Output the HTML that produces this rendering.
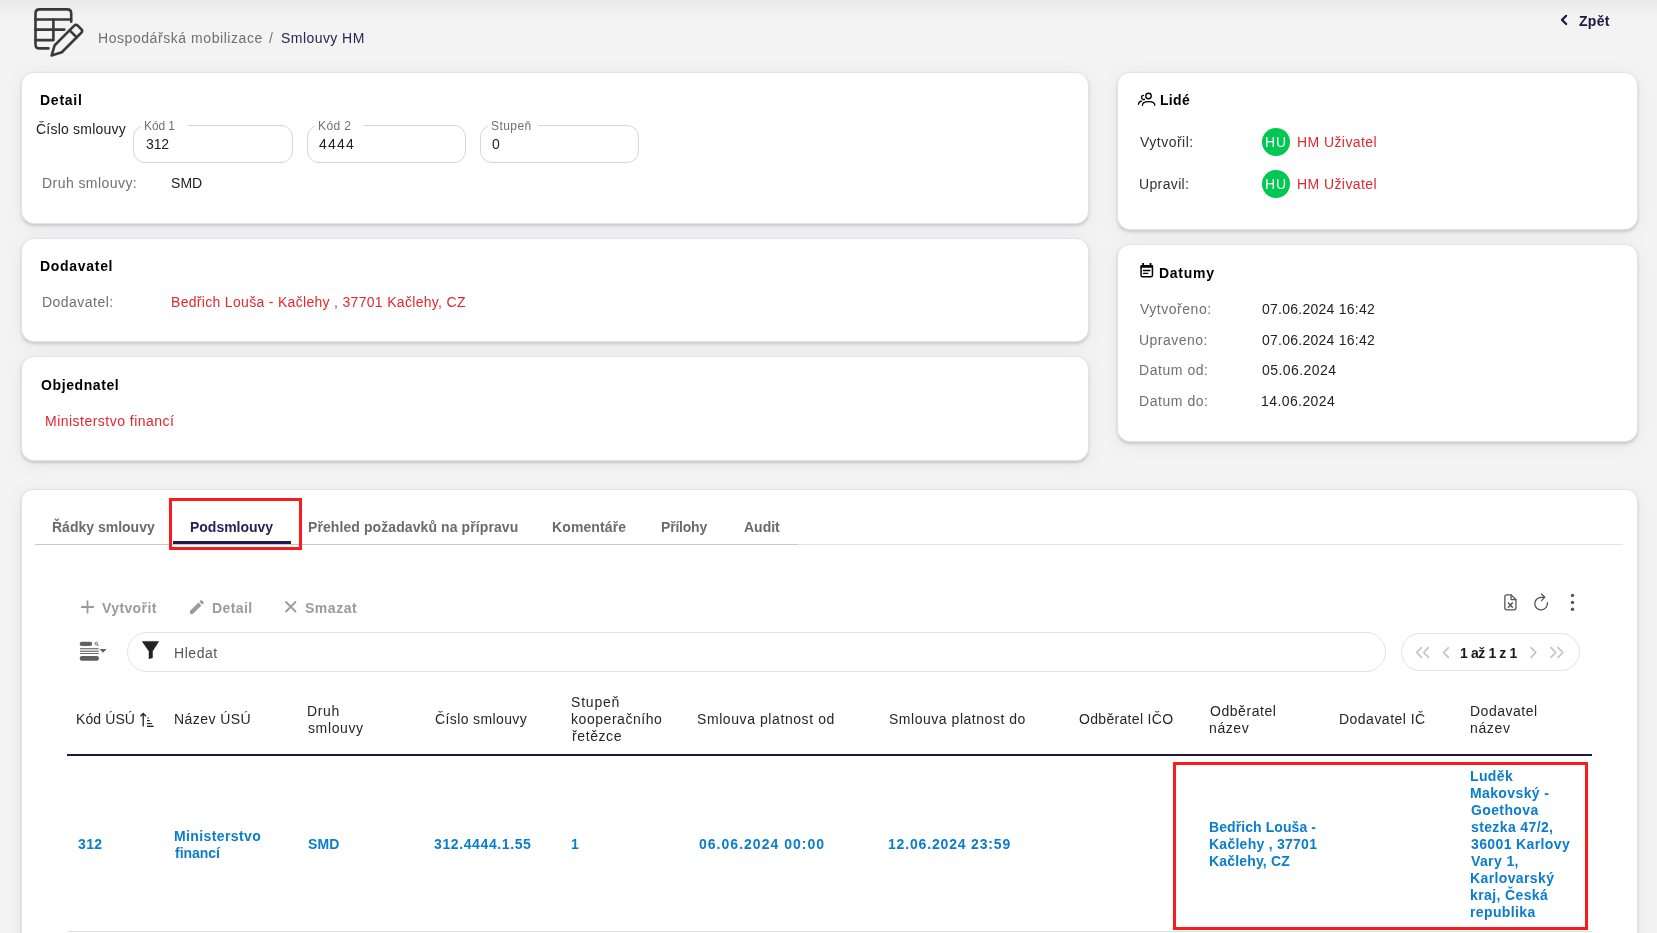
<!DOCTYPE html>
<html lang="cs">
<head>
<meta charset="utf-8">
<title>Smlouvy HM</title>
<style>
html,body{margin:0;padding:0;}
body{width:1657px;height:933px;overflow:hidden;position:relative;background:#f3f3f3;font-family:"Liberation Sans",sans-serif;}
.topshade{position:absolute;left:0;top:0;width:1657px;height:16px;background:linear-gradient(#e9e9e9,#f3f3f3);}
.card{position:absolute;background:#fff;border:1px solid #dfe5ee;border-radius:13px;box-shadow:0 2px 3px rgba(0,0,0,0.15),0 3px 18px rgba(0,0,0,0.05);box-sizing:border-box;}
.t{position:absolute;white-space:nowrap;will-change:transform;}
.inp{position:absolute;border:1px solid #d6d6d6;border-radius:12px;box-sizing:border-box;}
.gap{position:absolute;height:4px;background:#fff;}
.abs{position:absolute;}
svg{position:absolute;overflow:visible;}
</style>
</head>
<body>
<div class="topshade"></div>

<!-- logo -->
<svg style="left:0;top:0" width="100" height="70" viewBox="0 0 100 70">
  <g fill="none" stroke="#3a3a3a" stroke-width="2.6" stroke-linecap="round" stroke-linejoin="round">
    <path d="M48.5,48.4 H39.5 Q35.5,48.4 35.5,44.4 V13.4 Q35.5,9.4 39.5,9.4 H67.2 Q71.2,9.4 71.2,13.4 V21.8"/>
    <path d="M35.5,19.5 H71"/>
    <path d="M35.5,29.6 H64.3"/>
    <path d="M35.5,40.1 H53.4 V19.5"/>
    <g transform="translate(51.6,55.4) rotate(-45)">
      <path d="M0,0 L9.4,-5 L37,-5 Q39.5,-5 39.5,-2.5 L39.5,2.5 Q39.5,5 37,5 L9.4,5 Z"/>
      <path d="M30.5,-5 V5"/>
    </g>
  </g>
</svg>

<!-- Zpet chevron -->
<svg style="left:0;top:0" width="1657" height="40">
  <path d="M1566.2,15.8 L1562,19.9 L1566.2,24" fill="none" stroke="#1c1842" stroke-width="2.2" stroke-linecap="round" stroke-linejoin="round"/>
</svg>

<!-- cards -->
<div class="card" style="left:21px;top:72px;width:1068px;height:152px"></div>
<div class="card" style="left:21px;top:238px;width:1068px;height:104px"></div>
<div class="card" style="left:21px;top:356px;width:1068px;height:105px"></div>
<div class="card" style="left:1117px;top:72px;width:521px;height:158px"></div>
<div class="card" style="left:1117px;top:244px;width:521px;height:198px"></div>
<div class="card" style="left:21px;top:489px;width:1617px;height:480px;border-radius:12px"></div>

<!-- inputs -->
<div class="inp" style="left:133px;top:125px;width:160px;height:38px"></div>
<div class="gap" style="left:141px;top:123px;width:47px"></div>
<div class="inp" style="left:307px;top:125px;width:159px;height:38px"></div>
<div class="gap" style="left:315px;top:123px;width:48px"></div>
<div class="inp" style="left:480px;top:125px;width:159px;height:38px"></div>
<div class="gap" style="left:488px;top:123px;width:50px"></div>

<!-- avatars -->
<div class="abs" style="left:1262px;top:128px;width:28px;height:28px;border-radius:50%;background:#00c853"></div>
<div class="abs" style="left:1262px;top:170px;width:28px;height:28px;border-radius:50%;background:#00c853"></div>

<!-- people icon -->
<svg style="left:1130px;top:88px" width="30" height="24" viewBox="0 0 30 24">
  <g fill="none" stroke="#000" stroke-width="1.3" stroke-linecap="round">
    <circle cx="18.5" cy="8.0" r="2.75"/>
    <path d="M12.4,17.3 C12.4,14.6 15,13.6 18.6,13.6 C22.2,13.6 24.8,14.6 24.8,17.3"/>
    <path d="M13.5,7.3 A2.1,2.1 0 1 0 14.5,11.3"/>
    <path d="M8.5,16.3 C8.7,14.5 9.5,13.4 11.6,13.2"/>
  </g>
</svg>

<!-- calendar icon -->
<svg style="left:1130px;top:258px" width="30" height="24" viewBox="0 0 30 24">
  <rect x="11.05" y="7.7" width="11.4" height="11.05" rx="1.6" fill="none" stroke="#000" stroke-width="1.5"/>
  <rect x="10.4" y="7.0" width="12.7" height="2.8" rx="1" fill="#000"/>
  <rect x="12.2" y="5.0" width="1.8" height="2.6" fill="#000"/>
  <rect x="19.6" y="5.0" width="1.8" height="2.6" fill="#000"/>
  <path d="M13.5,12.5 H19.9 M13.5,15.4 H17.8" stroke="#000" stroke-width="1.3" stroke-linecap="round"/>
</svg>

<!-- tabs -->
<div class="abs" style="left:35px;top:544px;width:763px;height:1px;background:#c9c9c9"></div>
<div class="abs" style="left:798px;top:544px;width:825px;height:1px;background:#e3e3e3"></div>
<div class="abs" style="left:173px;top:541px;width:118px;height:3px;background:#1f1b4d"></div>
<div class="abs" style="left:169px;top:498px;width:133px;height:52px;border:3px solid #f81c1c;box-sizing:border-box"></div>

<!-- toolbar icons -->
<svg style="left:0;top:580px" width="1657" height="100">
  <g stroke="#9b9b9b" stroke-width="1.8" fill="none" stroke-linecap="butt">
    <path d="M87.5,20.5 V33.5 M81,27 H94"/>
    <path d="M285.5,21.5 L296,32 M296,21.5 L285.5,32"/>
  </g>
  <path transform="translate(187.7,17.8) scale(0.767)" d="M3 17.25V21h3.75L17.81 9.94l-3.75-3.75L3 17.25zM20.71 7.04c.39-.39.39-1.020 0-1.41l-2.34-2.34c-.39-.39-1.02-.39-1.41 0l-1.83 1.83 3.75 3.75 1.83-1.83z" fill="#9b9b9b"/>
</svg>

<!-- right toolbar icons -->
<svg style="left:1490px;top:585px" width="100" height="40" viewBox="0 0 100 40">
  <g fill="none" stroke="#555" stroke-width="1.3" stroke-linejoin="round" stroke-linecap="round">
    <path d="M21.1,9.85 H16.85 Q14.85,9.85 14.85,11.85 V22.85 Q14.85,24.85 16.85,24.85 H23.95 Q25.95,24.85 25.95,22.85 V14.7 Z"/>
    <path d="M21.1,9.85 V14.6 H25.95"/>
    <path d="M18,17.5 L22.8,22.7 M22.8,17.5 L18,22.7" stroke-width="1.4" stroke-linecap="butt"/>
    <path d="M51.1,12.3 A6.3,6.3 0 1 0 57.35,17.6"/>
    <path d="M51.1,12.3 H54.6 M51.5,9 L54.8,12.3 L51.5,15.6"/>
  </g>
  <g fill="#555">
    <circle cx="82.5" cy="10.4" r="1.7"/>
    <circle cx="82.5" cy="17.4" r="1.7"/>
    <circle cx="82.5" cy="24.3" r="1.7"/>
  </g>
</svg>

<!-- list icon -->
<svg style="left:70px;top:635px" width="50" height="35" viewBox="0 0 50 35">
  <g fill="#606060">
    <rect x="9.7" y="6.7" width="12.5" height="4.3" rx="2.1"/>
    <rect x="10" y="13.2" width="18.7" height="0.9"/>
    <rect x="10" y="15.7" width="18.7" height="1.1"/>
    <rect x="10" y="18.1" width="18.7" height="0.9"/>
    <rect x="9.7" y="21.1" width="19.3" height="4.6" rx="2.3"/>
    <path d="M29.5,14 H36.6 L33,17.8 Z"/>
  </g>
  <rect x="10" y="14.1" width="18.7" height="1.6" fill="#cfcfcf"/>
  <g fill="none" stroke="#606060" stroke-width="1">
    <circle cx="26.3" cy="8.6" r="1.3"/>
    <path d="M27.2,9.5 L28.7,10.9"/>
  </g>
</svg>

<!-- search box -->
<div class="abs" style="left:127px;top:632px;width:1259px;height:40px;border:1px solid #e3e3e3;border-radius:20px;box-sizing:border-box"></div>
<svg style="left:130px;top:630px" width="40" height="40" viewBox="0 0 40 40">
  <path d="M12.2,11.4 H28.7 L22.5,21.2 V27.7 L19,28.8 V21.2 Z" fill="#222" stroke="#222" stroke-width="0.5" stroke-linejoin="round"/>
</svg>

<!-- pagination -->
<div class="abs" style="left:1401px;top:633px;width:179px;height:38px;border:1px solid #e3e3e3;border-radius:19px;box-sizing:border-box"></div>
<svg style="left:1400px;top:640px" width="180" height="25" viewBox="0 0 180 25">
  <g fill="none" stroke="#c3c3c3" stroke-width="1.7" stroke-linecap="round" stroke-linejoin="round">
    <path d="M21.4,7.6 L16.6,12.5 L21.4,17.4 M28.4,7.6 L23.6,12.5 L28.4,17.4"/>
    <path d="M48.4,7.6 L43.6,12.5 L48.4,17.4"/>
    <path d="M131,7.6 L135.8,12.5 L131,17.4"/>
    <path d="M151,7.6 L155.8,12.5 L151,17.4 M158,7.6 L162.8,12.5 L158,17.4"/>
  </g>
</svg>

<!-- sort icon -->
<svg style="left:135px;top:708px" width="25" height="25" viewBox="0 0 25 25">
  <rect x="12" y="16.1" width="5.6" height="1.7" fill="#dcdcdc"/>
  <g fill="none" stroke="#222" stroke-width="1.3">
    <path d="M8.2,18.6 V5.9"/>
    <path d="M5.5,8.2 L8.2,5.5 L10.9,8.2"/>
    <path d="M12,12.6 H14.8 M12,15.5 H16.8 M12,18.4 H18.6" stroke-width="1.15"/>
  </g>
  <rect x="12.4" y="9.3" width="1.5" height="1.4" fill="#555"/>
</svg>

<!-- table lines -->
<div class="abs" style="left:67px;top:754px;width:1525px;height:2px;background:#1a1740"></div>
<div class="abs" style="left:67px;top:931px;width:1525px;height:1px;background:#e3e3e3"></div>
<div class="abs" style="left:1173px;top:762px;width:415px;height:168px;border:3px solid #f81c1c;box-sizing:border-box"></div>

<span class="t" style="left:98.2px;top:31px;font-size:14px;line-height:14px;color:#707070;letter-spacing:0.56px">Hospodářská mobilizace</span>
<span class="t" style="left:269.0px;top:31px;font-size:14px;line-height:14px;color:#707070;letter-spacing:0.00px">/</span>
<span class="t" style="left:280.6px;top:31px;font-size:14px;line-height:14px;color:#2c2453;letter-spacing:0.44px">Smlouvy HM</span>
<span class="t" style="left:1578.7px;top:14px;font-size:14px;line-height:14px;font-weight:700;color:#1c1842;letter-spacing:0.30px">Zpět</span>
<span class="t" style="left:39.6px;top:93px;font-size:14px;line-height:14px;font-weight:700;color:#000;letter-spacing:0.74px">Detail</span>
<span class="t" style="left:35.7px;top:122px;font-size:14px;line-height:14px;color:#222;letter-spacing:0.22px">Číslo smlouvy</span>
<span class="t" style="left:144.4px;top:120px;font-size:12px;line-height:12px;color:#707070;letter-spacing:-0.10px">Kód 1</span>
<span class="t" style="left:317.6px;top:120px;font-size:12px;line-height:12px;color:#707070;letter-spacing:0.42px">Kód 2</span>
<span class="t" style="left:490.8px;top:120px;font-size:12px;line-height:12px;color:#707070;letter-spacing:0.44px">Stupeň</span>
<span class="t" style="left:145.7px;top:137px;font-size:14px;line-height:14px;color:#222;letter-spacing:-0.10px">312</span>
<span class="t" style="left:318.6px;top:137px;font-size:14px;line-height:14px;color:#222;letter-spacing:1.23px">4444</span>
<span class="t" style="left:491.8px;top:137px;font-size:14px;line-height:14px;color:#222;letter-spacing:0.00px">0</span>
<span class="t" style="left:41.7px;top:176px;font-size:14px;line-height:14px;color:#707070;letter-spacing:0.44px">Druh smlouvy:</span>
<span class="t" style="left:170.8px;top:176px;font-size:14px;line-height:14px;color:#222;letter-spacing:0.05px">SMD</span>
<span class="t" style="left:39.9px;top:259px;font-size:14px;line-height:14px;font-weight:700;color:#000;letter-spacing:0.70px">Dodavatel</span>
<span class="t" style="left:41.8px;top:295px;font-size:14px;line-height:14px;color:#707070;letter-spacing:0.47px">Dodavatel:</span>
<span class="t" style="left:170.8px;top:295px;font-size:14px;line-height:14px;color:#e3262e;letter-spacing:0.31px">Bedřich Louša - Kačlehy , 37701 Kačlehy, CZ</span>
<span class="t" style="left:40.9px;top:378px;font-size:14px;line-height:14px;font-weight:700;color:#000;letter-spacing:0.60px">Objednatel</span>
<span class="t" style="left:44.8px;top:414px;font-size:14px;line-height:14px;color:#e3262e;letter-spacing:0.48px">Ministerstvo financí</span>
<span class="t" style="left:1159.6px;top:93px;font-size:14px;line-height:14px;font-weight:700;color:#000;letter-spacing:0.30px">Lidé</span>
<span class="t" style="left:1139.8px;top:135px;font-size:14px;line-height:14px;color:#333;letter-spacing:0.49px">Vytvořil:</span>
<span class="t" style="left:1296.8px;top:135px;font-size:14px;line-height:14px;color:#e3262e;letter-spacing:0.42px">HM Uživatel</span>
<span class="t" style="left:1138.8px;top:177px;font-size:14px;line-height:14px;color:#333;letter-spacing:0.36px">Upravil:</span>
<span class="t" style="left:1296.8px;top:177px;font-size:14px;line-height:14px;color:#e3262e;letter-spacing:0.42px">HM Uživatel</span>
<span class="t" style="left:1265.2px;top:135px;font-size:14px;line-height:14px;color:#fff;letter-spacing:0.80px">HU</span>
<span class="t" style="left:1265.2px;top:177px;font-size:14px;line-height:14px;color:#fff;letter-spacing:0.80px">HU</span>
<span class="t" style="left:1159.4px;top:266px;font-size:14px;line-height:14px;font-weight:700;color:#000;letter-spacing:0.72px">Datumy</span>
<span class="t" style="left:1139.7px;top:302px;font-size:14px;line-height:14px;color:#707070;letter-spacing:0.52px">Vytvořeno:</span>
<span class="t" style="left:1262.2px;top:302px;font-size:14px;line-height:14px;color:#222;letter-spacing:0.25px">07.06.2024 16:42</span>
<span class="t" style="left:1138.7px;top:333px;font-size:14px;line-height:14px;color:#707070;letter-spacing:0.46px">Upraveno:</span>
<span class="t" style="left:1262.2px;top:333px;font-size:14px;line-height:14px;color:#222;letter-spacing:0.25px">07.06.2024 16:42</span>
<span class="t" style="left:1138.7px;top:363px;font-size:14px;line-height:14px;color:#707070;letter-spacing:0.55px">Datum od:</span>
<span class="t" style="left:1262.2px;top:363px;font-size:14px;line-height:14px;color:#222;letter-spacing:0.43px">05.06.2024</span>
<span class="t" style="left:1138.7px;top:394px;font-size:14px;line-height:14px;color:#707070;letter-spacing:0.55px">Datum do:</span>
<span class="t" style="left:1261.2px;top:394px;font-size:14px;line-height:14px;color:#222;letter-spacing:0.41px">14.06.2024</span>
<span class="t" style="left:51.6px;top:520px;font-size:14px;line-height:14px;font-weight:700;color:#6b6b6b;letter-spacing:0.00px">Řádky smlouvy</span>
<span class="t" style="left:189.8px;top:520px;font-size:14px;line-height:14px;font-weight:700;color:#27235a;letter-spacing:-0.02px">Podsmlouvy</span>
<span class="t" style="left:307.9px;top:520px;font-size:14px;line-height:14px;font-weight:700;color:#6b6b6b;letter-spacing:0.09px">Přehled požadavků na přípravu</span>
<span class="t" style="left:552.4px;top:520px;font-size:14px;line-height:14px;font-weight:700;color:#6b6b6b;letter-spacing:0.11px">Komentáře</span>
<span class="t" style="left:661.2px;top:520px;font-size:14px;line-height:14px;font-weight:700;color:#6b6b6b;letter-spacing:-0.20px">Přílohy</span>
<span class="t" style="left:744.0px;top:520px;font-size:14px;line-height:14px;font-weight:700;color:#6b6b6b;letter-spacing:0.00px">Audit</span>
<span class="t" style="left:102.2px;top:601px;font-size:14px;line-height:14px;font-weight:700;color:#9b9b9b;letter-spacing:0.39px">Vytvořit</span>
<span class="t" style="left:212.0px;top:601px;font-size:14px;line-height:14px;font-weight:700;color:#9b9b9b;letter-spacing:0.40px">Detail</span>
<span class="t" style="left:305.4px;top:601px;font-size:14px;line-height:14px;font-weight:700;color:#9b9b9b;letter-spacing:0.52px">Smazat</span>
<span class="t" style="left:174.4px;top:646px;font-size:14px;line-height:14px;color:#555;letter-spacing:0.54px">Hledat</span>
<span class="t" style="left:1460.0px;top:646px;font-size:14px;line-height:14px;font-weight:700;color:#1a1a1a;letter-spacing:-0.39px">1 až 1 z 1</span>
<span class="t" style="left:76.4px;top:712px;font-size:14px;line-height:14px;color:#262626;letter-spacing:0.10px">Kód ÚSÚ</span>
<span class="t" style="left:174.0px;top:712px;font-size:14px;line-height:14px;color:#262626;letter-spacing:0.43px">Název ÚSÚ</span>
<span class="t" style="left:307.3px;top:704px;font-size:14px;line-height:14px;color:#262626;letter-spacing:0.63px">Druh</span>
<span class="t" style="left:308.3px;top:721px;font-size:14px;line-height:14px;color:#262626;letter-spacing:0.62px">smlouvy</span>
<span class="t" style="left:434.6px;top:712px;font-size:14px;line-height:14px;color:#262626;letter-spacing:0.38px">Číslo smlouvy</span>
<span class="t" style="left:571.2px;top:695px;font-size:14px;line-height:14px;color:#262626;letter-spacing:0.80px">Stupeň</span>
<span class="t" style="left:571.2px;top:712px;font-size:14px;line-height:14px;color:#262626;letter-spacing:0.55px">kooperačního</span>
<span class="t" style="left:572.2px;top:729px;font-size:14px;line-height:14px;color:#262626;letter-spacing:0.60px">řetězce</span>
<span class="t" style="left:697.3px;top:712px;font-size:14px;line-height:14px;color:#262626;letter-spacing:0.58px">Smlouva platnost od</span>
<span class="t" style="left:888.5px;top:712px;font-size:14px;line-height:14px;color:#262626;letter-spacing:0.53px">Smlouva platnost do</span>
<span class="t" style="left:1079.2px;top:712px;font-size:14px;line-height:14px;color:#262626;letter-spacing:0.32px">Odběratel IČO</span>
<span class="t" style="left:1210.0px;top:704px;font-size:14px;line-height:14px;color:#262626;letter-spacing:0.55px">Odběratel</span>
<span class="t" style="left:1209.0px;top:721px;font-size:14px;line-height:14px;color:#262626;letter-spacing:0.60px">název</span>
<span class="t" style="left:1339.2px;top:712px;font-size:14px;line-height:14px;color:#262626;letter-spacing:0.48px">Dodavatel IČ</span>
<span class="t" style="left:1470.4px;top:704px;font-size:14px;line-height:14px;color:#262626;letter-spacing:0.51px">Dodavatel</span>
<span class="t" style="left:1470.4px;top:721px;font-size:14px;line-height:14px;color:#262626;letter-spacing:0.65px">název</span>
<span class="t" style="left:77.6px;top:837px;font-size:14px;line-height:14px;font-weight:700;color:#0a7dcc;letter-spacing:0.35px">312</span>
<span class="t" style="left:174.3px;top:829px;font-size:14px;line-height:14px;font-weight:700;color:#0a7dcc;letter-spacing:0.39px">Ministerstvo</span>
<span class="t" style="left:175.3px;top:846px;font-size:14px;line-height:14px;font-weight:700;color:#0a7dcc;letter-spacing:-0.03px">financí</span>
<span class="t" style="left:308.0px;top:837px;font-size:14px;line-height:14px;font-weight:700;color:#0a7dcc;letter-spacing:0.10px">SMD</span>
<span class="t" style="left:434.2px;top:837px;font-size:14px;line-height:14px;font-weight:700;color:#0a7dcc;letter-spacing:0.61px">312.4444.1.55</span>
<span class="t" style="left:570.5px;top:837px;font-size:14px;line-height:14px;font-weight:700;color:#0a7dcc;letter-spacing:0.00px">1</span>
<span class="t" style="left:698.7px;top:837px;font-size:14px;line-height:14px;font-weight:700;color:#0a7dcc;letter-spacing:1.02px">06.06.2024 00:00</span>
<span class="t" style="left:887.8px;top:837px;font-size:14px;line-height:14px;font-weight:700;color:#0a7dcc;letter-spacing:0.83px">12.06.2024 23:59</span>
<span class="t" style="left:1208.8px;top:820px;font-size:14px;line-height:14px;font-weight:700;color:#0a7dcc;letter-spacing:0.08px">Bedřich Louša -</span>
<span class="t" style="left:1208.8px;top:837px;font-size:14px;line-height:14px;font-weight:700;color:#0a7dcc;letter-spacing:0.26px">Kačlehy , 37701</span>
<span class="t" style="left:1208.8px;top:854px;font-size:14px;line-height:14px;font-weight:700;color:#0a7dcc;letter-spacing:0.17px">Kačlehy, CZ</span>
<span class="t" style="left:1470.4px;top:769px;font-size:14px;line-height:14px;font-weight:700;color:#0a7dcc;letter-spacing:0.38px">Luděk</span>
<span class="t" style="left:1470.4px;top:786px;font-size:14px;line-height:14px;font-weight:700;color:#0a7dcc;letter-spacing:0.38px">Makovský -</span>
<span class="t" style="left:1471.4px;top:803px;font-size:14px;line-height:14px;font-weight:700;color:#0a7dcc;letter-spacing:0.38px">Goethova</span>
<span class="t" style="left:1471.4px;top:820px;font-size:14px;line-height:14px;font-weight:700;color:#0a7dcc;letter-spacing:0.38px">stezka 47/2,</span>
<span class="t" style="left:1471.4px;top:837px;font-size:14px;line-height:14px;font-weight:700;color:#0a7dcc;letter-spacing:0.38px">36001 Karlovy</span>
<span class="t" style="left:1471.4px;top:854px;font-size:14px;line-height:14px;font-weight:700;color:#0a7dcc;letter-spacing:0.38px">Vary 1,</span>
<span class="t" style="left:1470.4px;top:871px;font-size:14px;line-height:14px;font-weight:700;color:#0a7dcc;letter-spacing:0.38px">Karlovarský</span>
<span class="t" style="left:1470.4px;top:888px;font-size:14px;line-height:14px;font-weight:700;color:#0a7dcc;letter-spacing:0.38px">kraj, Česká</span>
<span class="t" style="left:1470.4px;top:905px;font-size:14px;line-height:14px;font-weight:700;color:#0a7dcc;letter-spacing:0.38px">republika</span>
</body>
</html>
